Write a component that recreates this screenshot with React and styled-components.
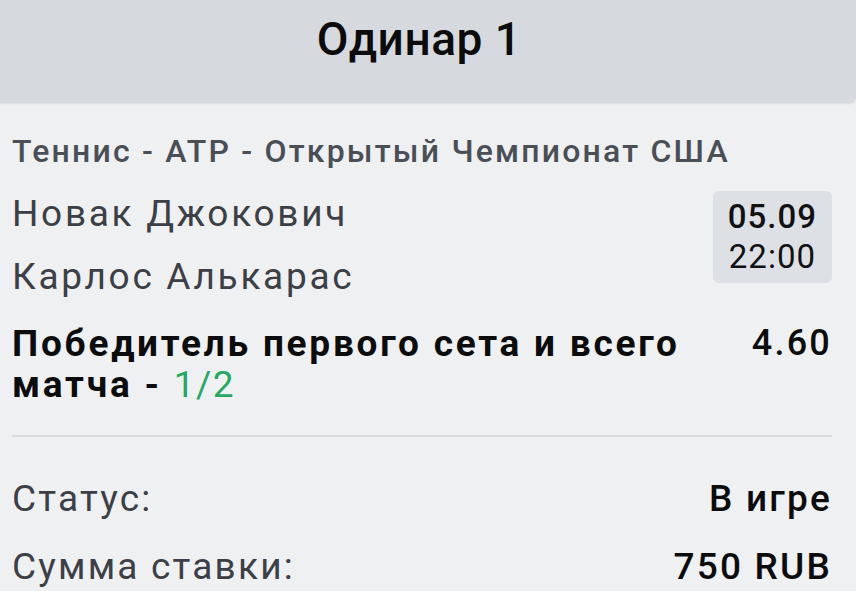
import React from 'react';
import styled, { createGlobalStyle } from 'styled-components';

const GlobalStyle = createGlobalStyle`
  html, body {
    margin: 0;
    padding: 0;
    background: #eef0f2;
    font-family: Roboto, "Noto Sans", sans-serif;
  }
`;

function App() {
  return (
    <>
      <GlobalStyle />
      <StyledCard>
        <StyledHeader>
          <StyledHeaderTitle>Одинар 1</StyledHeaderTitle>
        </StyledHeader>
        <StyledBody>
          <StyledCategory>Теннис - АТР - Открытый Чемпионат США</StyledCategory>
          <StyledMatch>
            <StyledPlayers>
              <StyledPlayer>Новак Джокович</StyledPlayer>
              <StyledPlayer>Карлос Алькарас</StyledPlayer>
            </StyledPlayers>
            <StyledDateBadge>
              <StyledDate>05.09</StyledDate>
              <StyledTime>22:00</StyledTime>
            </StyledDateBadge>
          </StyledMatch>
          <StyledOutcome>
            <StyledOutcomeText>
              Победитель первого сета и всего матча - <StyledPick>1/2</StyledPick>
            </StyledOutcomeText>
            <StyledOdds>4.60</StyledOdds>
          </StyledOutcome>
          <StyledDivider />
          <StyledInfoList>
            <StyledInfoRow>
              <StyledInfoLabel>Статус:</StyledInfoLabel>
              <StyledInfoValue>В игре</StyledInfoValue>
            </StyledInfoRow>
            <StyledInfoRow>
              <StyledInfoLabel>Сумма ставки:</StyledInfoLabel>
              <StyledInfoValue>750 RUB</StyledInfoValue>
            </StyledInfoRow>
          </StyledInfoList>
        </StyledBody>
      </StyledCard>
    </>
  );
}

const StyledCard = styled.div`
  width: 856px;
  height: 591px;
  background: #eef0f2;
  overflow: hidden;
`;

const StyledHeader = styled.div`
  height: 103px;
  box-sizing: border-box;
  padding: 16px 18px 0 0;
  background: #d6d9dd;
  border-bottom-right-radius: 6px;
  box-shadow: 0 1px 2px rgba(0, 0, 0, 0.08);
  text-align: center;
`;

const StyledHeaderTitle = styled.h1`
  margin: 0;
  font-size: 46px;
  line-height: 46px;
  font-weight: 500;
  color: #0c0c0c;
  letter-spacing: 0.5px;
`;

const StyledBody = styled.div`
  padding: 28px 24px 0 12px;
`;

const StyledCategory = styled.div`
  font-size: 32px;
  line-height: 40px;
  font-weight: 500;
  color: #4a4f56;
  letter-spacing: 2.2px;
  white-space: nowrap;
`;

const StyledMatch = styled.div`
  display: flex;
  justify-content: space-between;
  align-items: flex-start;
  margin-top: 11px;
`;

const StyledPlayers = styled.div`
  display: flex;
  flex-direction: column;
`;

const StyledPlayer = styled.div`
  font-size: 37px;
  line-height: 63px;
  color: #3c4046;
  letter-spacing: 2.7px;
`;

const StyledDateBadge = styled.div`
  margin-top: 9px;
  padding: 6px 15px;
  display: flex;
  flex-direction: column;
  align-items: center;
  background: #dde0e4;
  border-radius: 6px;
  font-size: 33px;
  line-height: 40px;
  letter-spacing: 1px;
  color: #111;
`;

const StyledDate = styled.span`
  font-weight: 500;
`;

const StyledTime = styled.span`
  font-weight: 400;
`;

const StyledOutcome = styled.div`
  display: flex;
  justify-content: space-between;
  align-items: flex-start;
  margin-top: 15px;
`;

const StyledOutcomeText = styled.div`
  width: 700px;
  font-size: 37px;
  line-height: 41px;
  font-weight: 700;
  color: #0c0c0c;
  letter-spacing: 2.75px;
`;

const StyledPick = styled.span`
  font-weight: 400;
  color: #27a862;
  letter-spacing: 1.5px;
`;

const StyledOdds = styled.div`
  font-size: 36px;
  line-height: 41px;
  font-weight: 500;
  color: #0c0c0c;
  letter-spacing: 2.2px;
`;

const StyledDivider = styled.div`
  height: 2px;
  margin-top: 30px;
  background: #d9dbde;
`;

const StyledInfoList = styled.div`
  display: flex;
  flex-direction: column;
  gap: 30px;
  margin-top: 43px;
`;

const StyledInfoRow = styled.div`
  display: flex;
  justify-content: space-between;
  align-items: baseline;
  font-size: 37px;
  line-height: 38px;
  letter-spacing: 2.2px;
`;

const StyledInfoLabel = styled.span`
  color: #3c4046;
`;

const StyledInfoValue = styled.span`
  font-weight: 500;
  color: #0c0c0c;
`;

export default App;
